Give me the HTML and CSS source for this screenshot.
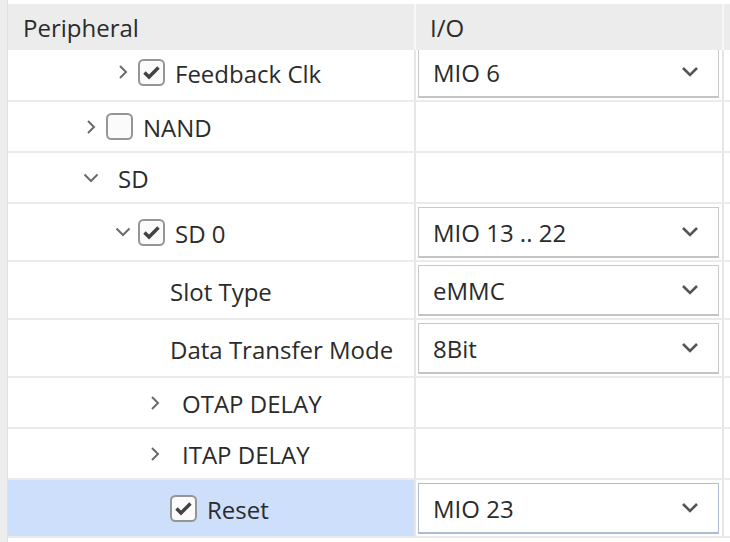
FILE: index.html
```html
<!DOCTYPE html>
<html>
<head>
<meta charset="utf-8">
<link rel="stylesheet" href="styles.css">
</head>
<body>
<div class="frame">
  <div class="gutter"></div>
  <div class="table">
    <div class="head">
      <div class="c1 hcell">Peripheral</div>
      <div class="c2 hcell">I/O</div>
      <div class="c3"></div>
    </div>
    <div class="body">
      <div class="row tall scrolled">
        <div class="c1 tree l1">
          <span class="exp"><svg class="chev-r" viewBox="0 0 10 16"><path d="M2 2 L8 8 L2 14"/></svg></span>
          <span class="cb"><svg viewBox="0 0 27 27"><rect x="1" y="1" width="25" height="25" rx="4.5"/><path d="M6.5 13.5 L11 18 L20.5 8.5"/></svg></span>
          <span class="lbl after-cb">Feedback Clk</span>
        </div>
        <div class="c2"><div class="select"><span class="val">MIO 6</span><svg class="chev-d" viewBox="0 0 18 11"><path d="M2 2 L9 9 L16 2"/></svg></div></div>
        <div class="c3"></div>
      </div>
      <div class="row">
        <div class="c1 tree l0">
          <span class="exp"><svg class="chev-r" viewBox="0 0 10 16"><path d="M2 2 L8 8 L2 14"/></svg></span>
          <span class="cb"><svg viewBox="0 0 27 27"><rect x="1" y="1" width="25" height="25" rx="4.5"/></svg></span>
          <span class="lbl after-cb">NAND</span>
        </div>
        <div class="c2"></div>
        <div class="c3"></div>
      </div>
      <div class="row">
        <div class="c1 tree l0">
          <span class="exp"><svg class="chev-d-tree" viewBox="0 0 16 10"><path d="M1.5 1.5 L8 8 L14.5 1.5"/></svg></span>
          <span class="lbl after-exp">SD</span>
        </div>
        <div class="c2"></div>
        <div class="c3"></div>
      </div>
      <div class="row tall">
        <div class="c1 tree l1">
          <span class="exp"><svg class="chev-d-tree" viewBox="0 0 16 10"><path d="M1.5 1.5 L8 8 L14.5 1.5"/></svg></span>
          <span class="cb"><svg viewBox="0 0 27 27"><rect x="1" y="1" width="25" height="25" rx="4.5"/><path d="M6.5 13.5 L11 18 L20.5 8.5"/></svg></span>
          <span class="lbl after-cb">SD 0</span>
        </div>
        <div class="c2"><div class="select"><span class="val">MIO 13 .. 22</span><svg class="chev-d" viewBox="0 0 18 11"><path d="M2 2 L9 9 L16 2"/></svg></div></div>
        <div class="c3"></div>
      </div>
      <div class="row tall">
        <div class="c1 tree l2">
          <span class="exp"></span>
          <span class="lbl leaf">Slot Type</span>
        </div>
        <div class="c2"><div class="select"><span class="val">eMMC</span><svg class="chev-d" viewBox="0 0 18 11"><path d="M2 2 L9 9 L16 2"/></svg></div></div>
        <div class="c3"></div>
      </div>
      <div class="row tall">
        <div class="c1 tree l2">
          <span class="exp"></span>
          <span class="lbl leaf">Data Transfer Mode</span>
        </div>
        <div class="c2"><div class="select"><span class="val">8Bit</span><svg class="chev-d" viewBox="0 0 18 11"><path d="M2 2 L9 9 L16 2"/></svg></div></div>
        <div class="c3"></div>
      </div>
      <div class="row">
        <div class="c1 tree l2">
          <span class="exp"><svg class="chev-r" viewBox="0 0 10 16"><path d="M2 2 L8 8 L2 14"/></svg></span>
          <span class="lbl after-exp">OTAP DELAY</span>
        </div>
        <div class="c2"></div>
        <div class="c3"></div>
      </div>
      <div class="row">
        <div class="c1 tree l2">
          <span class="exp"><svg class="chev-r" viewBox="0 0 10 16"><path d="M2 2 L8 8 L2 14"/></svg></span>
          <span class="lbl after-exp">ITAP DELAY</span>
        </div>
        <div class="c2"></div>
        <div class="c3"></div>
      </div>
      <div class="row tall selected">
        <div class="c1 tree l2">
          <span class="exp"></span>
          <span class="cb"><svg viewBox="0 0 27 27"><rect x="1" y="1" width="25" height="25" rx="4.5"/><path d="M6.5 13.5 L11 18 L20.5 8.5"/></svg></span>
          <span class="lbl after-cb">Reset</span>
        </div>
        <div class="c2"><div class="select focus"><span class="val">MIO 23</span><svg class="chev-d" viewBox="0 0 18 11"><path d="M2 2 L9 9 L16 2"/></svg></div></div>
        <div class="c3"></div>
      </div>
    </div>
  </div>
</div>
</body>
</html>
```
FILE: styles.css
```css
* { box-sizing: border-box; }
html, body { margin: 0; padding: 0; background: #ffffff; }
body {
  width: 730px;
  height: 542px;
  overflow: hidden;
  font-family: "Open Sans", "Noto Sans", sans-serif;
  font-size: 24px;
  color: #2b2b2b;
}
.frame {
  display: flex;
  height: 542px;
}
.gutter {
  width: 8px;
  flex: none;
  background: #ececec;
  border-right: 1px solid #e0e0e0;
}
.table {
  flex: 1;
  display: flex;
  flex-direction: column;
  padding-top: 4px;
  min-width: 0;
}
.head {
  display: flex;
  height: 46px;
  background: #ececec;
  flex: none;
}
.c1 {
  width: 408px;
  flex: none;
  border-right: 2px solid #e6e6e6;
}
.c2 {
  width: 308px;
  flex: none;
  border-right: 2px solid #e6e6e6;
  display: flex;
  align-items: center;
  padding: 0 3px 0 2px;
}
.c3 { flex: 1; }
.head .c1, .head .c2 { border-right-color: #f7f7f7; }
.hcell {
  display: flex;
  align-items: center;
}
.head .c1 { padding-left: 15px; }
.head .c2 { padding-left: 14px; }

.body {
  flex: 1;
  overflow: hidden;
}
.row {
  display: flex;
  height: 51px;
  border-bottom: 2px solid #ebebeb;
}
.row.tall { height: 58px; }
.row.scrolled { margin-top: -6px; }
.row.selected .c1 { background: #cddffb; }

.tree {
  display: flex;
  align-items: center;
}
.l0 { padding-left: 73px; }
.l1 { padding-left: 105px; }
.l2 { padding-left: 137px; }
.exp {
  width: 20px;
  height: 20px;
  flex: none;
  display: flex;
  align-items: center;
  justify-content: center;
}
.chev-r { width: 10px; height: 16px; }
.chev-d-tree { width: 16px; height: 10px; }
.exp path {
  fill: none;
  stroke: #6b6b6b;
  stroke-width: 2;
}
.cb {
  width: 27px;
  height: 27px;
  flex: none;
  margin-left: 5px;
  display: flex;
}
.cb svg { width: 27px; height: 27px; }
.cb rect {
  fill: #fbfbfb;
  stroke: #959595;
  stroke-width: 2;
}
.cb path {
  fill: none;
  stroke: #424242;
  stroke-width: 3.4;
}
.lbl { white-space: nowrap; padding-top: 2px; }
.val { padding-top: 1px; }
.after-cb { margin-left: 10px; }
.after-exp { margin-left: 17px; }
.leaf { margin-left: 5px; }

.select {
  flex: 1;
  height: 51px;
  border: 1px solid #c9c9c9;
  border-bottom: 2px solid #c4c4c4;
  background: #ffffff;
  display: flex;
  align-items: center;
  justify-content: space-between;
  padding: 0 19px 0 14px;
}
.select.focus {
  border-color: #aebcd6;
}
.chev-d { width: 18px; height: 11px; }
.chev-d path {
  fill: none;
  stroke: #555555;
  stroke-width: 2.6;
}
```
